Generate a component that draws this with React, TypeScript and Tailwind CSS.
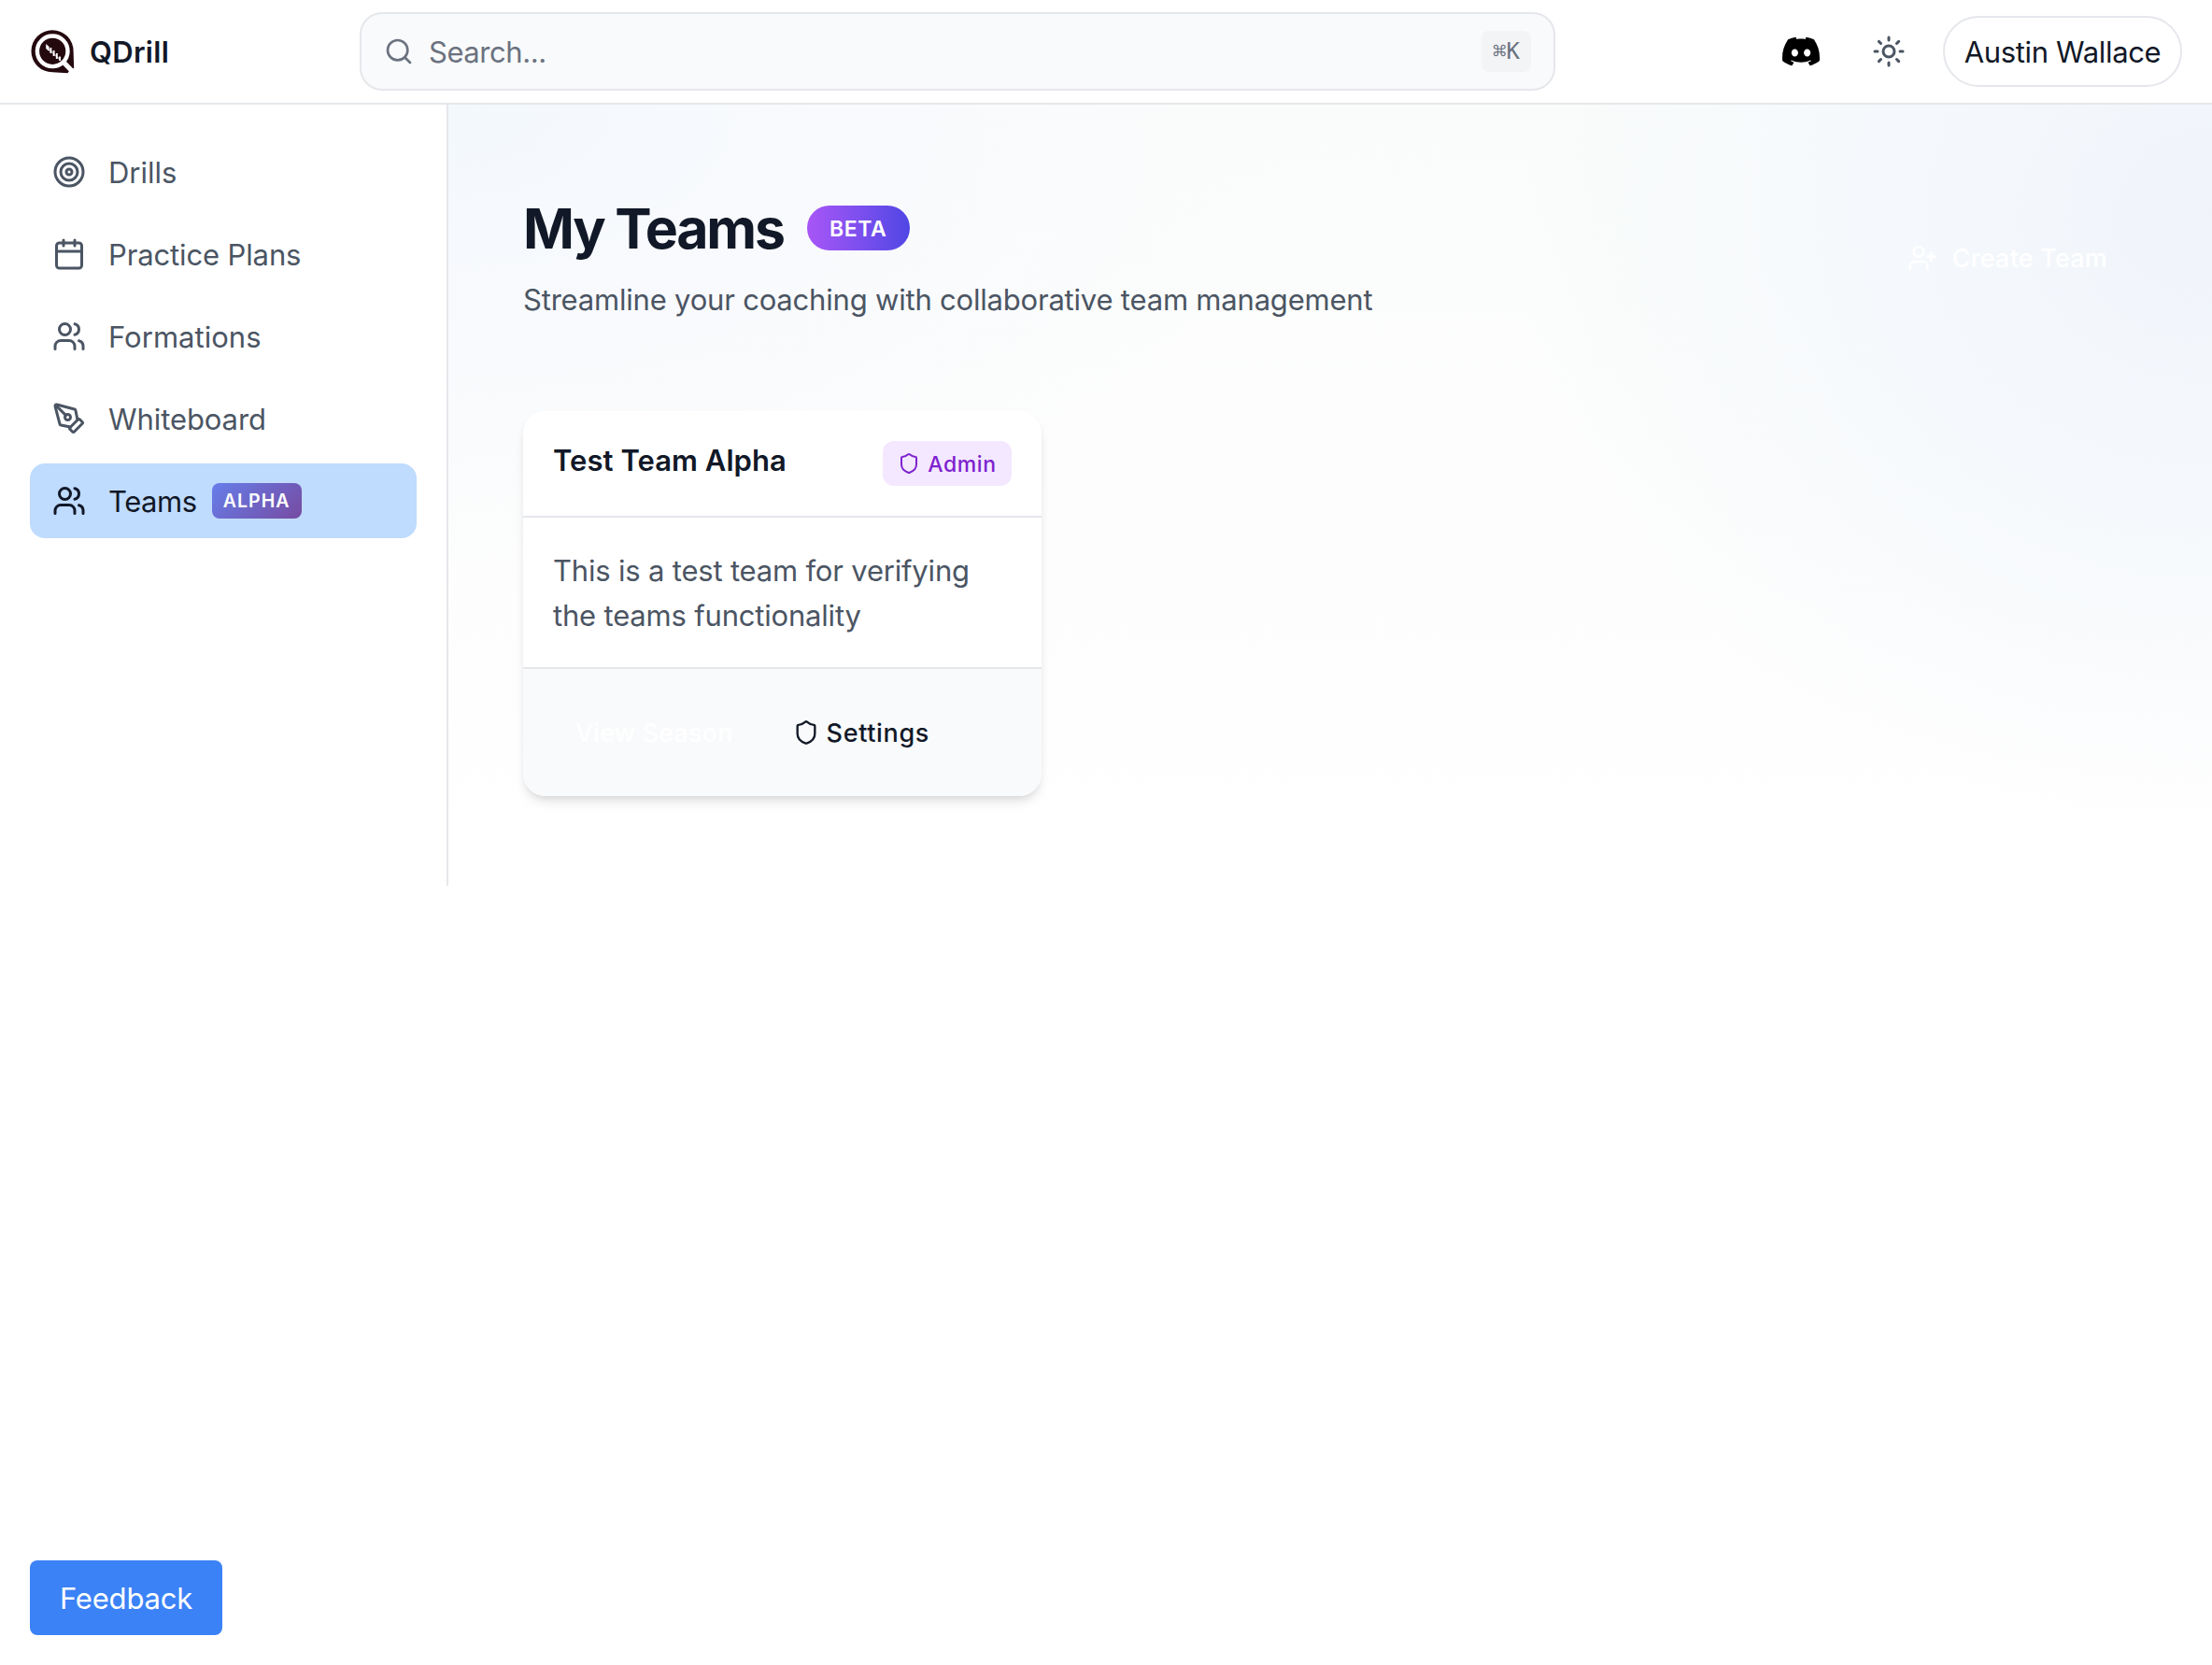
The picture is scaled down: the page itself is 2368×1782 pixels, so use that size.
import type { ReactNode } from "react";
import { Calendar, PenTool, Search, Shield, Sun, Target, UserPlus, Users, type LucideIcon } from "lucide-react";
import { SiDiscord } from "react-icons/si";

type NavItem = { label: string; icon: LucideIcon; tracking: string; badge?: string };

const navItems: NavItem[] = [
  { label: "Drills", icon: Target, tracking: "tracking-[0px]" },
  { label: "Practice Plans", icon: Calendar, tracking: "tracking-[-0.13px]" },
  { label: "Formations", icon: Users, tracking: "tracking-[0.03px]" },
  { label: "Whiteboard", icon: PenTool, tracking: "tracking-[-0.08px]" },
  { label: "Teams", icon: Users, tracking: "tracking-[-0.45px]", badge: "ALPHA" },
];

function Logo() {
  return (
    <svg viewBox="0 0 48 48" className="size-12 translate-y-px" aria-hidden="true">
      <path d="M24 0.2a22.5 22.5 0 1 0 0 45.1L40.5 46.3L44 41l3.2 0.8L46.6 23A22.5 22.5 0 0 0 24 0.2Z" fill="#24090f" />
      <circle cx="24.2" cy="22.8" r="16.3" fill="none" stroke="#fff" strokeWidth="4.4" />
      <path d="M35 33.5L46.5 45.5" stroke="#fff" strokeWidth="5.2" />
      <path d="M47.4 40.6V47H40.4Z" fill="#fff" />
      <path d="M17.2 15l3.4 3v5l-3.4-3Z" fill="#fff" />
      <path d="M22.4 19v6M25.6 22v6M28.8 25v6M32 28.4v4.6" stroke="#fff" strokeWidth="1.9" />
      <path d="M19 19.5L33 32.5" stroke="#fff" strokeWidth="1.4" opacity=".55" />
    </svg>
  );
}

function Header() {
  return (
    <header className="flex h-28 items-center border-b-2 border-[#e5e7eb] bg-white px-8">
      <a className="flex w-[353px] items-center gap-4">
        <Logo />
        <span className="translate-y-px text-[31px] font-semibold tracking-[0.3px] text-[#111827]">QDrill</span>
      </a>
      <div className="flex h-[84px] w-[1280px] items-center rounded-3xl border-2 border-[#e5e7eb] bg-[#f9fafb] px-6">
        <Search className="size-8 text-[#6b7280]" />
        <span className="ml-4 translate-y-px text-[31px] tracking-[-0.45px] text-[#6b7280]">Search...</span>
        <kbd className="ml-auto flex h-11 items-center rounded-lg bg-[#f3f4f6] px-3 font-['DejaVu_Sans_Mono',monospace] text-[24px] text-[#6b7280]">
          ⌘K
        </kbd>
      </div>
      <div className="ml-auto flex items-center">
        <SiDiscord className="size-10 text-black" />
        <Sun className="ml-14 size-9 text-[#4b5563]" />
        <button className="ml-10 flex h-[76px] w-[256px] items-center justify-center rounded-full border-2 border-[#e5e7eb] text-[31px] tracking-[-0.33px] text-[#111827]">
          <span className="translate-y-px whitespace-nowrap">Austin Wallace</span>
        </button>
      </div>
    </header>
  );
}

function Sidebar() {
  return (
    <aside className="w-[480px] shrink-0 border-r-2 border-[#e5e7eb] bg-white p-8">
      <nav className="flex flex-col gap-2">
        {navItems.map(({ label, icon: Icon, tracking, badge }) => (
          <a
            key={label}
            className={`flex h-20 items-center rounded-2xl px-6 text-[31px] ${badge ? "bg-[#bfdbfe] text-[#111827]" : "text-[#4b5563]"}`}
          >
            <Icon className="size-9" />
            <span className={`ml-6 translate-y-px ${tracking}`}>{label}</span>
            {badge && (
              <span className="ml-4 flex h-[38px] w-24 items-center justify-center rounded-lg bg-[linear-gradient(135deg,#667eea_0%,#764ba2_100%)] text-[19.5px] font-semibold tracking-[1.1px] text-white">
                <span className="translate-y-px">{badge}</span>
              </span>
            )}
          </a>
        ))}
      </nav>
    </aside>
  );
}

function CardButton({ children, className }: { children: ReactNode; className: string }) {
  return <button className={`flex h-[72px] items-center gap-2 px-6 text-[27px] font-medium ${className}`}>{children}</button>;
}

function TeamCard() {
  return (
    <article className="overflow-hidden rounded-3xl bg-white shadow-[0_8px_12px_-2px_rgba(0,0,0,0.1),0_4px_8px_-4px_rgba(0,0,0,0.1)]">
      <div className="flex items-start justify-between border-b-2 border-[#e5e7eb] p-8">
        <h2 className="translate-y-px text-[31px] leading-10 font-semibold tracking-[0.05px] text-[#111827]">Test Team Alpha</h2>
        <span className="flex h-12 items-center gap-2 rounded-xl bg-[#f3e8ff] px-4 text-[23px] font-medium tracking-[0.6px] text-[#7e22ce]">
          <Shield className="size-6" />
          <span className="translate-y-px">Admin</span>
        </span>
      </div>
      <p className="p-8 text-[31px] leading-12 tracking-[-0.19px] text-[#4b5563]">
        <span className="block translate-y-px">This is a test team for verifying the teams functionality</span>
      </p>
      <div className="flex gap-4 border-t-2 border-[#e5e7eb] bg-[#f9fafb] p-8">
        <CardButton className="tracking-[0.15px] text-white">
          <span className="translate-y-px">View Season</span>
        </CardButton>
        <CardButton className="tracking-[0.65px] text-[#111827]">
          <Shield className="size-7" />
          <span className="translate-y-px">Settings</span>
        </CardButton>
      </div>
    </article>
  );
}

function Main() {
  return (
    <main className="grow bg-[radial-gradient(740px_650px_at_100%_14%,#f0f4fa_0%,#f5f8fc_45%,transparent_100%),radial-gradient(900px_520px_at_0%_0%,#f3f8fd_0%,#f9fafd_50%,transparent_100%),linear-gradient(180deg,#fafcfb_0%,#fcfdfc_50%,#fefefe_80%,#ffffff_100%)] px-20 py-24">
      <div className="flex items-center justify-between">
        <div>
          <div className="flex h-[72px] items-center">
            <h1 className="translate-y-px text-[59px] leading-[72px] font-bold tracking-[-2.25px] text-[#111827]">My Teams</h1>
            <span className="ml-[25px] flex h-12 w-[110px] items-center justify-center rounded-full bg-linear-to-r from-[#a855f7] to-[#4f46e5] text-[23px] font-semibold tracking-[0.6px] text-white">
              <span className="translate-y-px">BETA</span>
            </span>
          </div>
          <p className="mt-4 translate-y-px text-[31px] leading-12 tracking-[-0.2px] text-[#4b5563]">
            Streamline your coaching with collaborative team management
          </p>
        </div>
        <button className="flex h-20 items-center gap-4 px-8 text-[27px] font-medium tracking-[0.2px] text-white">
          <UserPlus className="size-8" />
          <span className="translate-y-px">Create Team</span>
        </button>
      </div>
      <div className="mt-24 grid grid-cols-3 gap-8">
        <TeamCard />
      </div>
    </main>
  );
}

export default function App() {
  return (
    <div className="min-h-screen bg-white font-['Inter',sans-serif] leading-[1.5]">
      <Header />
      <div className="flex h-[836px]">
        <Sidebar />
        <Main />
      </div>
      <button className="fixed bottom-8 left-8 flex h-20 w-[206px] items-center rounded-lg bg-[#3b82f6] px-8 text-[31px] tracking-[-0.2px] text-white">
        <span className="translate-y-px">Feedback</span>
      </button>
    </div>
  );
}
